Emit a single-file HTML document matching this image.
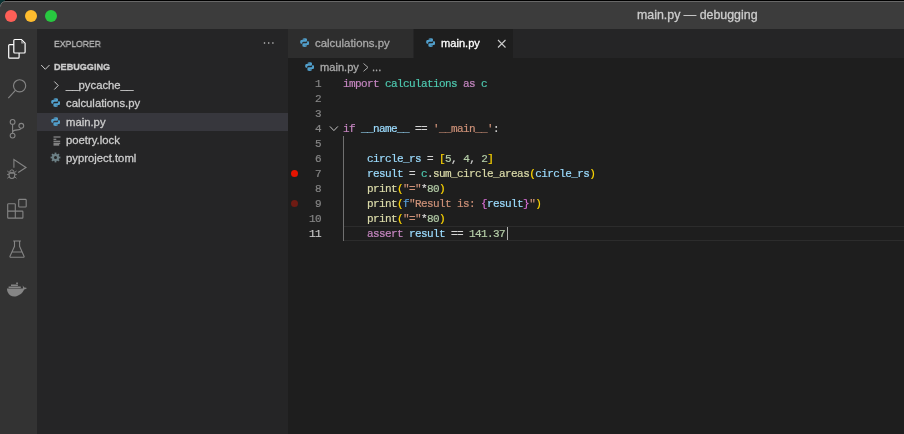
<!DOCTYPE html>
<html><head><meta charset="utf-8">
<style>
*{margin:0;padding:0;box-sizing:border-box}
html,body{width:904px;height:434px;overflow:hidden;background:#1e1e1e}
body{position:relative;font-family:"Liberation Sans",sans-serif}
.a{position:absolute}
.t{position:absolute;white-space:nowrap;will-change:transform;-webkit-text-stroke:0.3px currentColor}
#title{left:0;top:0;width:904px;height:29px;background:#3c3c3c;border-top-left-radius:7px}
.tl{position:absolute;top:9.8px;width:12.4px;height:12.4px;border-radius:50%}
.side-item{position:absolute;left:37px;width:251px;height:18.3px}
.side-item .t{left:28.5px;top:0.2px;line-height:18.3px;font-size:11.3px;color:#cccccc}
.code{position:absolute;left:288px;font-family:"Liberation Mono",monospace;font-size:11px;letter-spacing:-0.6px;white-space:pre;line-height:15px;height:15px;width:616px;will-change:transform;-webkit-text-stroke:0.2px currentColor}
.ln{position:absolute;left:0;width:33px;text-align:right;color:#858585}
.src{position:absolute;left:55px}
.kw{color:#c586c0}.ns{color:#4ec9b0}.v{color:#9cdcfe}.s{color:#ce9178}.n{color:#b5cea8}.f{color:#dcdcaa}.b1{color:#ffd700}.b2{color:#da70d6}.st{color:#569cd6}.o{color:#d4d4d4}
</style></head><body>
<div id="title" class="a" style="border-radius:0">
  <svg class="a" style="left:0;top:0" width="904" height="29"><path d="M0 0 H904 V1 H0 Z" fill="#000"/><path d="M0 0 H5 V1 Q1.5 1.5 0.6 5 H0 Z" fill="#0b3333"/><path d="M0.5 6.5 Q0.8 1.5 6 1.5 H904" stroke="#686868" stroke-width="1" fill="none"/></svg>
  <div class="tl" style="left:4.8px;background:#fe5f57"></div>
  <div class="tl" style="left:24.8px;background:#febc2e"></div>
  <div class="tl" style="left:44.8px;background:#28c840"></div>
</div>
<div class="t" style="left:637px;top:6px;line-height:18px;font-size:12.4px;color:#cccccc">main.py — debugging</div>

<!-- activity bar -->
<div class="a" style="left:0;top:29px;width:37px;height:405px;background:#333333"></div>
<svg class="a" style="left:0;top:29px" width="37" height="405" viewBox="0 29 37 405" fill="none">
  <!-- files -->
  <path d="M13.8 44.6 H9.6 Q8.7 44.6 8.7 45.5 V57.2 Q8.7 58.1 9.6 58.1 H18.2 Q19.1 58.1 19.1 57.2 V53" stroke="#ffffff" stroke-width="1.2"/>
  <path d="M14.7 39.5 H21.4 L25.1 43.2 V52.1 Q25.1 53 24.2 53 H14.7 Q13.8 53 13.8 52.1 V40.4 Q13.8 39.5 14.7 39.5 Z" stroke="#ffffff" stroke-width="1.2"/>
  <path d="M21.2 40 V43.4 H24.6 Z" fill="#9a9a9a"/>
  <!-- search -->
  <circle cx="19.6" cy="85.8" r="6.1" stroke="#858585" stroke-width="1.15"/>
  <path d="M15.4 90.3 L8.3 98.2" stroke="#858585" stroke-width="1.1"/>
  <!-- source control -->
  <circle cx="12.6" cy="121.9" r="2.4" stroke="#858585" stroke-width="1.1"/>
  <circle cx="21.3" cy="125.8" r="2.4" stroke="#858585" stroke-width="1.1"/>
  <circle cx="12.6" cy="135.6" r="2.4" stroke="#858585" stroke-width="1.1"/>
  <path d="M12.6 124.3 V133.2 M12.6 131.6 Q13.6 130 17.5 129.9 Q20.8 129.8 21.2 128.2" stroke="#858585" stroke-width="1.1"/>
  <!-- run debug -->
  <path d="M13.9 167.8 V159.6 L26 167.5 L18.2 172.5" stroke="#858585" stroke-width="1.1"/>
  <path d="M9.6 172.4 Q9.8 169.9 11.9 169.8 Q14 169.9 14.2 172.4 Z" stroke="#858585" stroke-width="1"/>
  <path d="M9.1 173.2 H14.7 V175.5 Q14.7 178.4 11.9 178.5 Q9.1 178.4 9.1 175.5 Z" stroke="#858585" stroke-width="1.1"/>
  <path d="M7.3 171 L9.2 172.5 M16.5 171 L14.6 172.5 M7 174.6 H9 M16.8 174.6 H14.8 M7.3 178.3 L9.3 176.7 M16.5 178.3 L14.5 176.7" stroke="#858585" stroke-width="0.9"/>
  <!-- extensions -->
  <path d="M8.2 203.7 H14.6 Q15.3 203.7 15.3 204.4 V211.1 H22.2 Q22.9 211.1 22.9 211.8 V217.4 Q22.9 218.1 22.2 218.1 H8.4 Q7.7 218.1 7.7 217.4 V204.4 Q7.7 203.7 8.4 203.7 Z M7.7 211.1 H15.3 V218.1" stroke="#858585" stroke-width="1.1"/>
  <rect x="18.7" y="199.4" width="7.5" height="7.6" rx="0.8" stroke="#858585" stroke-width="1.1"/>
  <!-- testing -->
  <path d="M13.2 241 H20.9 M14.5 241 V246.3 L10 256.2 Q9.7 257.3 10.8 257.3 H23.3 Q24.4 257.3 24 256.2 L19.6 246.3 V241 M12.2 252 H21.7" stroke="#858585" stroke-width="1.1"/>
  <!-- docker -->
  <path d="M6.9 288.6 H22.9 Q23.2 287.3 22.6 285.6 Q23.7 286.4 24.2 287.5 Q25.6 287.2 27 288 Q25.8 289.4 24.2 289.6 Q22 294.5 16.5 296.3 Q13 297 10.5 295.6 Q7.1 293.2 6.9 288.6 Z" fill="#858585"/>
  <path d="M8.6 286.6 H20.8 V288 H8.6 Z M11 284.6 H17.9 V286 H11 Z M16.2 282.4 H17.9 V284 H16.2 Z" fill="#858585"/>
</svg>

<!-- sidebar -->
<div class="a" style="left:37px;top:29px;width:251px;height:405px;background:#252526"></div>
<div class="t" style="left:54px;top:37.5px;line-height:12px;font-size:9.7px;color:#bbbbbb;transform-origin:0 0;transform:scaleX(0.89)">EXPLORER</div>
<svg class="a" style="left:262px;top:41px" width="13" height="4"><circle cx="2.5" cy="2" r="0.8" fill="#cccccc"/><circle cx="6.7" cy="2" r="0.8" fill="#cccccc"/><circle cx="10.9" cy="2" r="0.8" fill="#cccccc"/></svg>
<svg class="a" style="left:40px;top:62px" width="12" height="10"><path d="M1.2 3 L5.3 7.3 L9.5 3" stroke="#cccccc" stroke-width="1" fill="none"/></svg>
<div class="t" style="left:54px;top:61px;line-height:12px;font-size:9.1px;font-weight:bold;color:#cccccc">DEBUGGING</div>
<div class="side-item" style="top:76px"><svg class="a" style="left:16px;top:4px" width="8" height="11"><path d="M1.3 1.5 L5.2 5.5 L1.3 9.5" stroke="#cccccc" stroke-width="1" fill="none"/></svg><div class="t">__pycache__</div></div>
<div class="side-item" style="top:94.3px"><svg class="a" style="left:13.8px;top:4px" width="9.4" height="9" viewBox="1.8 0.8 12.4 14.4" preserveAspectRatio="none"><path d="M7.9 1C5 1 5.2 2.3 5.2 2.3V3.6H8V4H4C4 4 2 3.8 2 7C2 10.2 3.7 10 3.7 10H4.8V8.5C4.8 8.5 4.7 6.8 6.5 6.8H9.4C9.4 6.8 11 6.8 11 5.2V2.6C11 2.6 11.3 1 7.9 1Z" fill="#519fcb"/><path d="M8.1 15C11 15 10.8 13.7 10.8 13.7V12.4H8V12H12C12 12 14 12.2 14 9C14 5.8 12.3 6 12.3 6H11.2V7.5C11.2 7.5 11.3 9.2 9.5 9.2H6.6C6.6 9.2 5 9.2 5 10.8V13.4C5 13.4 4.7 15 8.1 15Z" fill="#519fcb"/></svg><div class="t">calculations.py</div></div>
<div class="side-item" style="top:112.6px;background:#37373d"><svg class="a" style="left:13.8px;top:4px" width="9.4" height="9" viewBox="1.8 0.8 12.4 14.4" preserveAspectRatio="none"><path d="M7.9 1C5 1 5.2 2.3 5.2 2.3V3.6H8V4H4C4 4 2 3.8 2 7C2 10.2 3.7 10 3.7 10H4.8V8.5C4.8 8.5 4.7 6.8 6.5 6.8H9.4C9.4 6.8 11 6.8 11 5.2V2.6C11 2.6 11.3 1 7.9 1Z" fill="#519fcb"/><path d="M8.1 15C11 15 10.8 13.7 10.8 13.7V12.4H8V12H12C12 12 14 12.2 14 9C14 5.8 12.3 6 12.3 6H11.2V7.5C11.2 7.5 11.3 9.2 9.5 9.2H6.6C6.6 9.2 5 9.2 5 10.8V13.4C5 13.4 4.7 15 8.1 15Z" fill="#519fcb"/></svg><div class="t">main.py</div></div>
<div class="side-item" style="top:130.9px"><svg class="a" style="left:15.5px;top:5px" width="9" height="10"><path d="M0.5 1 H7.5 M0.5 3.2 H3.3 M0.5 5.3 H7.2 M0.5 7.3 H7.2 M0.5 8.9 H6.2" stroke="#a0a0a0" stroke-width="1.1"/></svg><div class="t">poetry.lock</div></div>
<div class="side-item" style="top:149.2px"><svg class="a" style="left:12.8px;top:3.1px" width="11" height="11" viewBox="0 0 11 11"><g transform="translate(5.5 5.5)" fill="#6d8086"><circle r="3.6"/><rect x="-0.9" y="-4.9" width="1.8" height="9.8"/><rect x="-0.9" y="-4.9" width="1.8" height="9.8" transform="rotate(45)"/><rect x="-0.9" y="-4.9" width="1.8" height="9.8" transform="rotate(90)"/><rect x="-0.9" y="-4.9" width="1.8" height="9.8" transform="rotate(135)"/></g><circle cx="5.5" cy="5.5" r="1.5" fill="#252526"/></svg><div class="t">pyproject.toml</div></div>

<!-- editor -->
<div class="a" style="left:288px;top:29px;width:616px;height:29px;background:#252526"></div>
<div class="a" style="left:288px;top:29px;width:125px;height:29px;background:#2d2d2d"></div>
<div class="a" style="left:413.5px;top:29px;width:99.5px;height:29px;background:#1e1e1e"></div>
<svg class="a" style="left:299.5px;top:38.2px" width="9.4" height="9" viewBox="1.8 0.8 12.4 14.4" preserveAspectRatio="none"><path d="M7.9 1C5 1 5.2 2.3 5.2 2.3V3.6H8V4H4C4 4 2 3.8 2 7C2 10.2 3.7 10 3.7 10H4.8V8.5C4.8 8.5 4.7 6.8 6.5 6.8H9.4C9.4 6.8 11 6.8 11 5.2V2.6C11 2.6 11.3 1 7.9 1Z" fill="#519fcb"/><path d="M8.1 15C11 15 10.8 13.7 10.8 13.7V12.4H8V12H12C12 12 14 12.2 14 9C14 5.8 12.3 6 12.3 6H11.2V7.5C11.2 7.5 11.3 9.2 9.5 9.2H6.6C6.6 9.2 5 9.2 5 10.8V13.4C5 13.4 4.7 15 8.1 15Z" fill="#519fcb"/></svg>
<div class="t" style="left:314.5px;top:35.3px;line-height:16px;font-size:11.4px;color:#a8a8a8">calculations.py</div>
<svg class="a" style="left:426px;top:38.2px" width="9.4" height="9" viewBox="1.8 0.8 12.4 14.4" preserveAspectRatio="none"><path d="M7.9 1C5 1 5.2 2.3 5.2 2.3V3.6H8V4H4C4 4 2 3.8 2 7C2 10.2 3.7 10 3.7 10H4.8V8.5C4.8 8.5 4.7 6.8 6.5 6.8H9.4C9.4 6.8 11 6.8 11 5.2V2.6C11 2.6 11.3 1 7.9 1Z" fill="#519fcb"/><path d="M8.1 15C11 15 10.8 13.7 10.8 13.7V12.4H8V12H12C12 12 14 12.2 14 9C14 5.8 12.3 6 12.3 6H11.2V7.5C11.2 7.5 11.3 9.2 9.5 9.2H6.6C6.6 9.2 5 9.2 5 10.8V13.4C5 13.4 4.7 15 8.1 15Z" fill="#519fcb"/></svg>
<div class="t" style="left:440.8px;top:35.3px;line-height:16px;font-size:11.1px;color:#ffffff">main.py</div>
<svg class="a" style="left:497px;top:39px" width="10" height="10"><path d="M1 1 L8.5 8.5 M8.5 1 L1 8.5" stroke="#cccccc" stroke-width="1.1"/></svg>

<!-- breadcrumbs -->
<svg class="a" style="left:304.7px;top:62.3px" width="9.4" height="9" viewBox="1.8 0.8 12.4 14.4" preserveAspectRatio="none"><path d="M7.9 1C5 1 5.2 2.3 5.2 2.3V3.6H8V4H4C4 4 2 3.8 2 7C2 10.2 3.7 10 3.7 10H4.8V8.5C4.8 8.5 4.7 6.8 6.5 6.8H9.4C9.4 6.8 11 6.8 11 5.2V2.6C11 2.6 11.3 1 7.9 1Z" fill="#519fcb"/><path d="M8.1 15C11 15 10.8 13.7 10.8 13.7V12.4H8V12H12C12 12 14 12.2 14 9C14 5.8 12.3 6 12.3 6H11.2V7.5C11.2 7.5 11.3 9.2 9.5 9.2H6.6C6.6 9.2 5 9.2 5 10.8V13.4C5 13.4 4.7 15 8.1 15Z" fill="#519fcb"/></svg>
<div class="t" style="left:319.6px;top:59.3px;line-height:16px;font-size:11.1px;color:#a9a9a9">main.py</div>
<svg class="a" style="left:362px;top:62px" width="8" height="11"><path d="M1.5 1.5 L6 5.4 L1.5 9.3" stroke="#a9a9a9" stroke-width="1" fill="none"/></svg>
<div class="t" style="left:371.6px;top:58.6px;line-height:16px;font-size:11.1px;color:#a9a9a9">...</div>

<!-- gutter -->
<div class="a" style="left:291.1px;top:169.7px;width:7.2px;height:7.2px;border-radius:50%;background:#e51400"></div>
<div class="a" style="left:291.1px;top:199.9px;width:7.2px;height:7.2px;border-radius:50%;background:#6e1b13"></div>
<svg class="a" style="left:328px;top:124px" width="12" height="9"><path d="M1.9 2.4 L5.9 6.6 L9.9 2.4" stroke="#c5c5c5" stroke-width="1" fill="none"/></svg>
<!-- current line -->
<div class="a" style="left:343px;top:226px;width:561px;height:15px;border-top:1px solid #2c2c2c;border-bottom:1px solid #2c2c2c"></div>
<div class="a" style="left:343px;top:136px;width:1px;height:105px;background:#707070"></div>
<div class="a" style="left:507px;top:227px;width:1px;height:13px;background:#aeafad"></div>

<div class="code" style="top:77px"><span class="ln">1</span><span class="src"><span class="kw">import</span> <span class="ns">calculations</span> <span class="kw">as</span> <span class="ns">c</span></span></div>
<div class="code" style="top:92px"><span class="ln">2</span></div>
<div class="code" style="top:107px"><span class="ln">3</span></div>
<div class="code" style="top:122px"><span class="ln">4</span><span class="src"><span class="kw">if</span> <span class="v">__name__</span> <span class="o">==</span> <span class="s">'__main__'</span><span class="o">:</span></span></div>
<div class="code" style="top:137px"><span class="ln">5</span></div>
<div class="code" style="top:152px"><span class="ln">6</span><span class="src">    <span class="v">circle_rs</span> <span class="o">=</span> <span class="b1">[</span><span class="n">5</span><span class="o">, </span><span class="n">4</span><span class="o">, </span><span class="n">2</span><span class="b1">]</span></span></div>
<div class="code" style="top:167px"><span class="ln">7</span><span class="src">    <span class="v">result</span> <span class="o">=</span> <span class="ns">c</span><span class="o">.</span><span class="f">sum_circle_areas</span><span class="b1">(</span><span class="v">circle_rs</span><span class="b1">)</span></span></div>
<div class="code" style="top:182px"><span class="ln">8</span><span class="src">    <span class="f">print</span><span class="b1">(</span><span class="s">"="</span><span class="o">*</span><span class="n">80</span><span class="b1">)</span></span></div>
<div class="code" style="top:197px"><span class="ln">9</span><span class="src">    <span class="f">print</span><span class="b1">(</span><span class="st">f</span><span class="s">"Result is: </span><span class="b2">{</span><span class="v">result</span><span class="b2">}</span><span class="s">"</span><span class="b1">)</span></span></div>
<div class="code" style="top:212px"><span class="ln">10</span><span class="src">    <span class="f">print</span><span class="b1">(</span><span class="s">"="</span><span class="o">*</span><span class="n">80</span><span class="b1">)</span></span></div>
<div class="code" style="top:227px"><span class="ln" style="color:#c6c6c6">11</span><span class="src">    <span class="kw">assert</span> <span class="v">result</span> <span class="o">==</span> <span class="n">141.37</span></span></div>
</body></html>
